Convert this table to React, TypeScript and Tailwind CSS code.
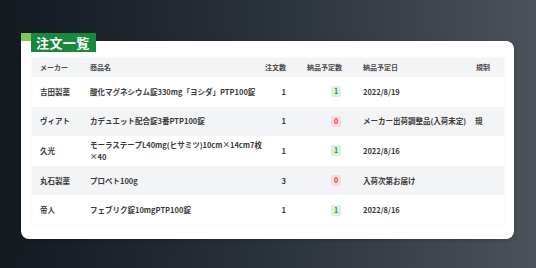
import React from "react";

type Row = {
  maker: string;
  product: React.ReactNode;
  qty: string;
  planned: number;
  date: string;
  rule?: string;
};

const rows: Row[] = [
  { maker: "吉田製薬", product: "酸化マグネシウム錠330mg「ヨシダ」PTP100錠", qty: "1", planned: 1, date: "2022/8/19" },
  { maker: "ヴィアト", product: "カデュエット配合錠3番PTP100錠", qty: "1", planned: 0, date: "メーカー出荷調整品(入荷未定)", rule: "規" },
  {
    maker: "久光",
    product: (
      <>
        <span className="block whitespace-nowrap">モーラステープL40mg(ヒサミツ)10cm×14cm7枚</span>
        <span className="block whitespace-nowrap">×40</span>
      </>
    ),
    qty: "1",
    planned: 1,
    date: "2022/8/16",
  },
  { maker: "丸石製薬", product: "プロペト100g", qty: "3", planned: 0, date: "入荷次第お届け" },
  { maker: "帝人", product: "フェブリク錠10mgPTP100錠", qty: "1", planned: 1, date: "2022/8/16" },
];

const cols = "grid grid-cols-[58px_172px_24px_56px_133px_29px] items-center";

const Badge: React.FC<{ n: number }> = ({ n }) => (
  <span
    className={`mr-[1px] flex h-[11px] w-[10px] items-center justify-center rounded-[2px] text-[7px] font-bold leading-none ${
      n > 0 ? "bg-[#d9f2dc] text-[#2f8a3f]" : "bg-[#fcd9dc] text-[#e0353f]"
    }`}
  >
    {n}
  </span>
);

export default function App() {
  return (
    <div className="h-[268px] w-[536px] overflow-hidden bg-gradient-to-r from-[#141920] via-[#2a323b] to-[#4c525a] pl-[21px] pr-[22px] pt-[41px] font-['Noto_Sans_CJK_JP','Noto_Sans',sans-serif]">
      {/* card */}
      <div className="relative h-[198px] rounded-[8px] rounded-tl-none bg-white px-[11px] pb-[14px] pr-[10px] pt-[17px] shadow-[0_1px_4px_rgba(0,0,0,0.2)]">
        {/* title tag */}
        <div className="absolute left-0 top-[-8px] h-[8px] w-[10px] bg-[#86c45a]" />
        <div className="absolute left-[10px] top-[-8px] flex h-[19px] w-[65px] items-center bg-[#17883c] pl-[5px] text-[13px] font-bold leading-none tracking-[0.4px] text-white">
          注文一覧
        </div>

        {/* table */}
        <div className="bg-white text-[#3a3a3a] shadow-[0_0_3px_rgba(0,0,0,0.06)]">
          <div className={`${cols} h-[19px] bg-[#f3f4f6] text-[7px] font-bold text-[#4a4a4a]`}>
            <div className="pl-[8px]">メーカー</div>
            <div>商品名</div>
            <div className="whitespace-nowrap text-right">注文数</div>
            <div className="whitespace-nowrap text-right">納品予定数</div>
            <div className="pl-[21px]">納品予定日</div>
            <div className="pl-[1px]">規制</div>
          </div>
          {rows.map((r, i) => (
            <div
              key={i}
              className={`${cols} h-[29.6px] text-[7.5px] font-bold leading-[12px] ${
                i % 2 === 1 ? "bg-[#f3f4f6]" : "bg-white"
              }`}
            >
              <div className="pl-[8px] whitespace-nowrap">{r.maker}</div>
              <div className="whitespace-nowrap">{r.product}</div>
              <div className="text-right">{r.qty}</div>
              <div className="flex justify-end">
                <Badge n={r.planned} />
              </div>
              <div className="whitespace-nowrap pl-[21px]">{r.date}</div>
              <div className="overflow-hidden whitespace-nowrap">{r.rule ?? ""}</div>
            </div>
          ))}
        </div>
      </div>
    </div>
  );
}
